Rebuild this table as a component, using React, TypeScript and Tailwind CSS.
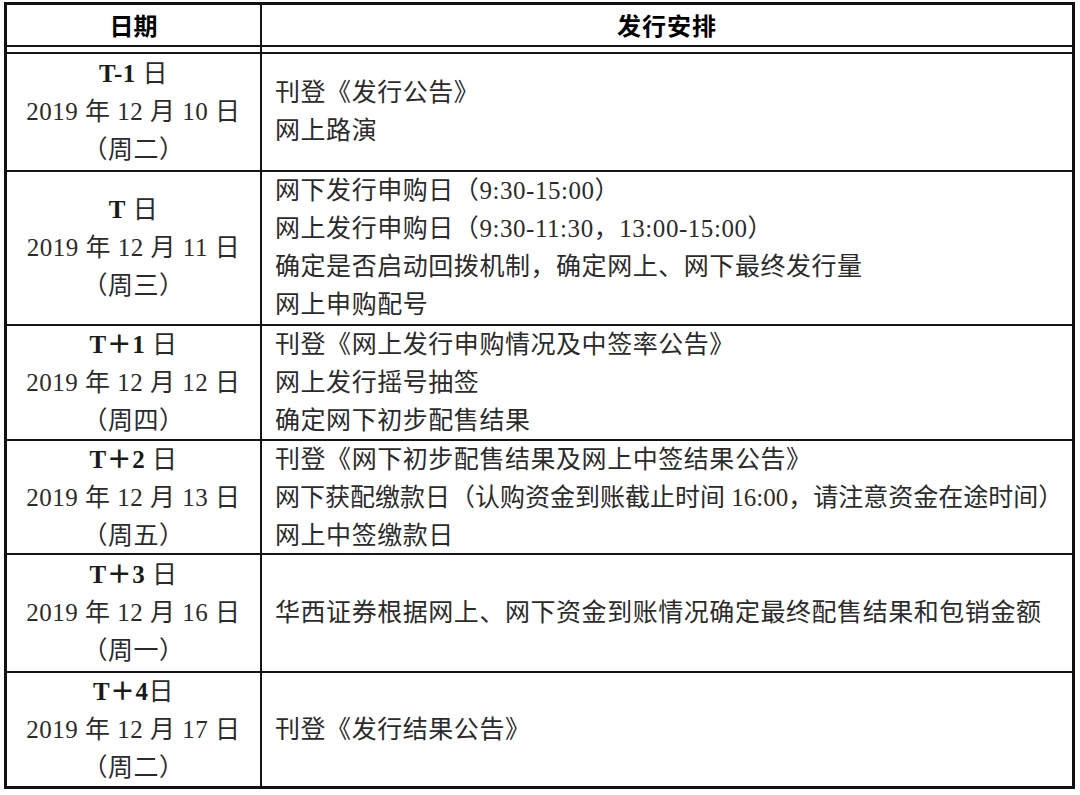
import React from "react";

type Row = {
  day: string;
  gap: boolean;
  date: string;
  week: string;
  items: string[];
  h: string;
};

const rows: Row[] = [
  {
    day: "T-1",
    gap: true,
    date: "2019 年 12 月 10 日",
    week: "（周二）",
    items: ["刊登《发行公告》", "网上路演"],
    h: "h-[118px]",
  },
  {
    day: "T",
    gap: true,
    date: "2019 年 12 月 11 日",
    week: "（周三）",
    items: [
      "网下发行申购日（9:30-15:00）",
      "网上发行申购日（9:30-11:30，13:00-15:00）",
      "确定是否启动回拨机制，确定网上、网下最终发行量",
      "网上申购配号",
    ],
    h: "h-[154px]",
  },
  {
    day: "T＋1",
    gap: true,
    date: "2019 年 12 月 12 日",
    week: "（周四）",
    items: ["刊登《网上发行申购情况及中签率公告》", "网上发行摇号抽签", "确定网下初步配售结果"],
    h: "h-[115px]",
  },
  {
    day: "T＋2",
    gap: true,
    date: "2019 年 12 月 13 日",
    week: "（周五）",
    items: [
      "刊登《网下初步配售结果及网上中签结果公告》",
      "网下获配缴款日（认购资金到账截止时间 16:00，请注意资金在途时间）",
      "网上中签缴款日",
    ],
    h: "h-[114px]",
  },
  {
    day: "T＋3",
    gap: true,
    date: "2019 年 12 月 16 日",
    week: "（周一）",
    items: ["华西证券根据网上、网下资金到账情况确定最终配售结果和包销金额"],
    h: "h-[118px]",
  },
  {
    day: "T＋4",
    gap: false,
    date: "2019 年 12 月 17 日",
    week: "（周二）",
    items: ["刊登《发行结果公告》"],
    h: "h-[113px]",
  },
];

// this one line already fills the cell, so it keeps normal spacing
const longLine = "网下获配缴款日（认购资金到账截止时间 16:00，请注意资金在途时间）";

function ScheduleRow({ row, last }: { row: Row; last: boolean }) {
  return (
    <div
      className={`grid grid-cols-[255px_1fr] ${row.h} ${last ? "" : "border-b-2 border-[#141414]"}`}
    >
      <div className="flex flex-col items-center justify-center border-r-2 border-[#141414] leading-[38px] tracking-[0.5px]">
        <div>
          <span className="font-bold text-[#1a1a1a]">{row.day}</span>
          {row.gap ? " 日" : "日"}
        </div>
        <div>{row.date}</div>
        <div>{row.week}</div>
      </div>
      <div className="flex flex-col justify-center pl-[13px] leading-[38px] whitespace-nowrap">
        {row.items.map((t) => (
          <div key={t} className={t === longLine ? "tracking-normal" : "tracking-[0.55px]"}>
            {t}
          </div>
        ))}
      </div>
    </div>
  );
}

export default function App() {
  return (
    <div className="w-[1080px] h-[795px] bg-white pt-[2px] pl-[4px] font-['Liberation_Serif','Noto_Sans_CJK_SC',serif] text-[25px] text-[#2b2b2b]">
      <div className="w-[1071px] border-[3px] border-[#111]">
        {/* header */}
        <div className="grid grid-cols-[255px_1fr] h-[42px] border-b-2 border-[#141414] font-['Noto_Sans_CJK_SC',sans-serif] font-bold text-[24px] text-black">
          <div className="flex items-center justify-center border-r-2 border-[#141414]">日期</div>
          <div className="flex items-center justify-center tracking-[1px]">发行安排</div>
        </div>
        {/* double rule gap */}
        <div className="grid grid-cols-[255px_1fr] h-[7px] border-b-2 border-[#141414]">
          <div className="border-r-2 border-[#141414]" />
          <div />
        </div>
        {rows.map((r, i) => (
          <ScheduleRow key={r.date} row={r} last={i === rows.length - 1} />
        ))}
      </div>
    </div>
  );
}
